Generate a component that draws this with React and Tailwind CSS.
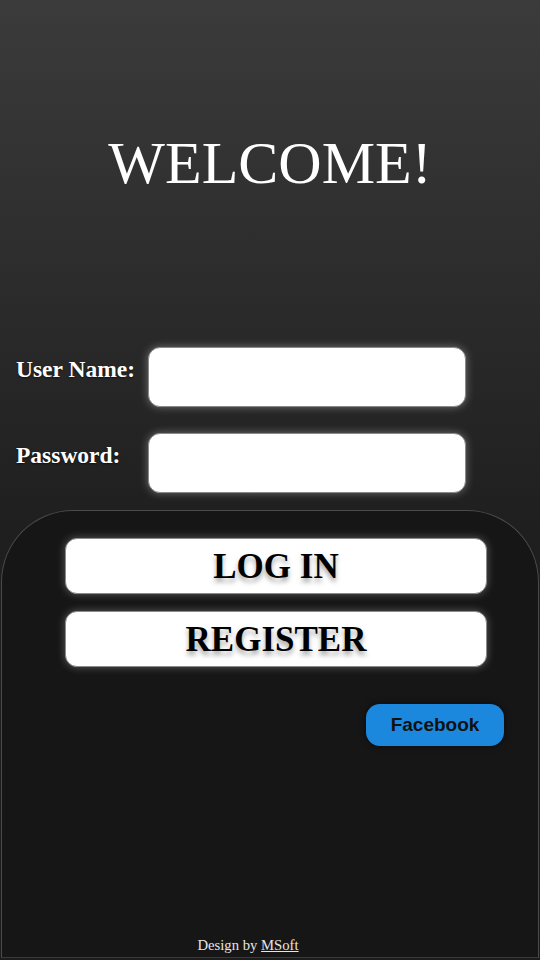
const serif = "font-['Liberation_Serif','Times_New_Roman',serif]";

const Field = ({ label, type }) => {
  return (
    <div className="flex items-center">
      <label
        className={`${serif} w-[148px] shrink-0 pl-4 text-[23.5px] font-bold text-white -mt-[14px] [text-shadow:0_1px_2px_rgba(0,0,0,0.6)]`}
      >
        {label}
      </label>
      <input
        type={type}
        className="h-[60px] w-[318px] rounded-xl border border-[#8a8a8a] bg-white shadow-[0_0_8px_rgba(255,255,255,0.35)] outline-none"
      />
    </div>
  );
};

const BigButton = ({ children }) => {
  return (
    <button
      className={`${serif} flex h-[56px] w-[422px] items-center justify-center rounded-xl border border-[#8a8a8a] bg-white pt-[3px] text-[35px] font-bold text-black shadow-[0_0_8px_rgba(255,255,255,0.3)] [text-shadow:0_4px_5px_rgba(0,0,0,0.35)]`}
    >
      {children}
    </button>
  );
};

export default function App() {
  return (
    <div className="flex h-[960px] w-[540px] flex-col bg-[linear-gradient(to_bottom,#3b3b3b_0%,#1f1f1f_55%,#1c1c1c_100%)]">
      {/* Heading */}
      <div className="flex h-[347px] justify-center pt-[128px]">
        <h1 className={`${serif} text-[60px] leading-[70px] text-white`}>
          WELCOME!
        </h1>
      </div>

      {/* Login fields */}
      <div className="flex flex-col gap-[26px]">
        <Field label="User Name:" type="text" />
        <Field label="Password:" type="password" />
      </div>

      {/* Bottom panel */}
      <div className="mx-[1px] mt-[17px] mb-[2px] flex flex-1 flex-col items-center rounded-t-[72px] border border-b-[#3a3a3a] border-[#4a4a4a] bg-[#161616] pt-[27px]">
        <div className="flex flex-col gap-[17px] pl-[12px]">
          <BigButton>LOG IN</BigButton>
          <BigButton>REGISTER</BigButton>
        </div>

        <div className="mt-[37px] flex w-full justify-end pr-[34px]">
          <button className="h-[42px] w-[138px] rounded-[14px] bg-[#1b88de] font-['Liberation_Sans',Arial,sans-serif] text-[19px] font-bold text-[#111] shadow-[0_0_6px_rgba(0,0,0,0.6)]">
            Facebook
          </button>
        </div>

        <div className="flex-1" />

        <p
          className={`${serif} pr-[44px] pb-[1px] text-[14.7px] text-[#e5e5e5]`}
        >
          Design by{" "}
          <a href="#" className="underline">
            MSoft
          </a>
        </p>
      </div>
    </div>
  );
}
